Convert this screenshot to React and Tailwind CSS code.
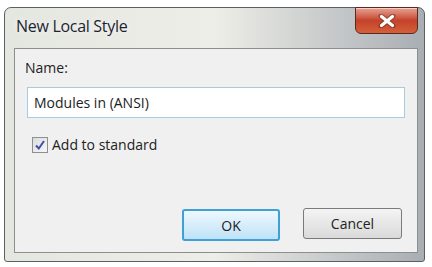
import React from "react";

function CloseButton() {
  return (
    <div className="mt-[-1px] flex h-[27px] w-[63px] items-center justify-center rounded-b-[6px] border border-[#5a2a22] bg-gradient-to-b from-[#e6a293] via-[#c4412a] to-[#d4603a] shadow-[inset_0_1px_0_rgba(255,255,255,0.5)]">
      <svg width="18" height="14" viewBox="0 0 18 14">
        <path d="M3 2 L15 12 M15 2 L3 12" stroke="#4a2018" strokeWidth="5" strokeLinecap="round" opacity="0.45" />
        <path d="M3.5 2.5 L14.5 11.5 M14.5 2.5 L3.5 11.5" stroke="#ffffff" strokeWidth="3.2" strokeLinecap="round" />
      </svg>
    </div>
  );
}

function Checkbox() {
  return (
    <div className="flex h-[16px] w-[16px] items-center justify-center border border-[#8f8f8f] bg-gradient-to-br from-[#dcdcdc] to-[#f6f6f6]">
      <svg width="12" height="12" viewBox="0 0 12 12">
        <path d="M2 6.5 L4.8 9.5 L10 2" fill="none" stroke="#3b4fa8" strokeWidth="2" />
      </svg>
    </div>
  );
}

export default function App() {
  return (
    <div className="h-[267px] w-[432px] overflow-hidden bg-white pl-[4px] pt-[7px] font-['Open_Sans',sans-serif] text-[#222]">
      <div className="flex h-[255px] w-[421px] flex-col rounded-t-[7px] rounded-b-[3px] border border-[#5c5f63] bg-gradient-to-r from-[#e4e6e0] via-[#eeeee8] to-[#a9aeb3] pb-[8px] pl-[9px] pr-[6px]">
        <div className="flex h-[40px] items-start justify-between">
          <div className="pl-[2px] pt-[8px] text-[16px] leading-[20px] tracking-[-0.3px] text-[#1c2430] [text-shadow:0_0_6px_rgba(255,255,255,0.9)]">
            New Local Style
          </div>
          <CloseButton />
        </div>
        <div className="flex flex-1 flex-col border border-[#8c8e90] bg-[#f0f0f0]">
          <div className="ml-[10px] mt-[10px] text-[14px] leading-[18px]">Name:</div>
          <div className="mx-[12px] mt-[10px] flex h-[31px] items-center border border-[#a9cbe2] bg-white pl-[6px] text-[14px]">
            Modules in (ANSI)
          </div>
          <div className="ml-[17px] mt-[19px] flex items-center gap-[4px] text-[14px] leading-[16px]">
            <Checkbox />
            <span>Add to standard</span>
          </div>
          <div className="mt-auto flex justify-end gap-[23px] pb-[11px] pr-[15px]">
            <div className="flex h-[32px] w-[98px] items-center justify-center rounded-[3px] border-2 border-[#3fa0d6] bg-gradient-to-b from-[#eef8fe] to-[#bfe2f7] text-[14px]">
              OK
            </div>
            <div className="mt-[-1px] flex h-[31px] w-[99px] items-center justify-center rounded-[3px] border border-[#7a7a7a] bg-gradient-to-b from-[#f4f4f4] to-[#dadada] text-[14px]">
              Cancel
            </div>
          </div>
        </div>
      </div>
    </div>
  );
}
